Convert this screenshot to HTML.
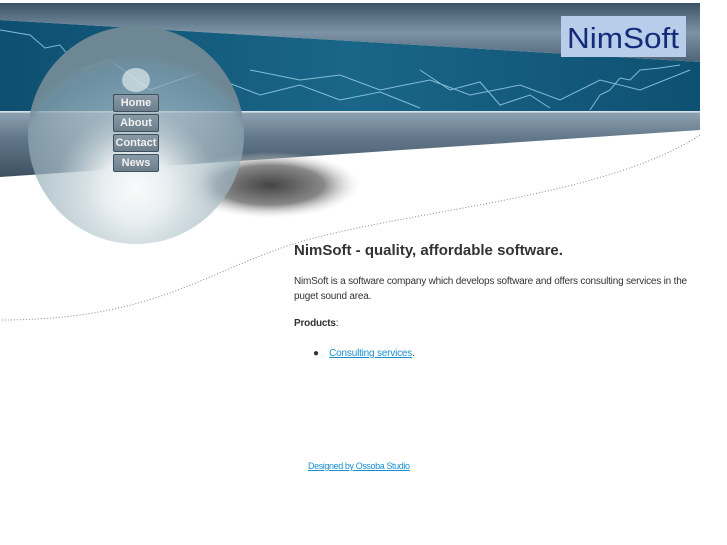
<!DOCTYPE html>
<html><head><style>
body{margin:0;width:727px;height:545px;background:#fff;font-family:"Liberation Sans",sans-serif;position:relative;overflow:hidden}
.b{position:absolute;left:113px;width:44px;height:16px;border:1px solid #3d4f5c;border-radius:2px;background:linear-gradient(#8a9aa6,#6d7f8c);color:#f0f0f0;font-size:11px;font-weight:bold;text-align:center;line-height:16px}
h1{position:absolute;left:294px;top:242px;margin:0;font-size:15px;color:#333;font-weight:bold}
.t{position:absolute;left:294px;font-size:10px;color:#333;line-height:15px;letter-spacing:-0.2px}
a{color:#1a8fd0}
</style></head><body>
<svg width="727" height="545" style="position:absolute;left:0;top:0">
<defs>
<linearGradient id="g1" x1="0" y1="0" x2="0" y2="1"><stop offset="0" stop-color="#3d5466"/><stop offset=".5" stop-color="#7c93a5"/><stop offset="1" stop-color="#4d6477"/></linearGradient>
<linearGradient id="g2" x1="0" y1="0" x2="0" y2="1"><stop offset="0" stop-color="#8ea2b2"/><stop offset=".4" stop-color="#62788a"/><stop offset="1" stop-color="#3e5163"/></linearGradient>
<linearGradient id="g3" x1="0" y1="0" x2="1" y2="0"><stop offset="0" stop-color="#0e4f70"/><stop offset=".5" stop-color="#1a6688"/><stop offset="1" stop-color="#0e5072"/></linearGradient>
<radialGradient id="sp" cx=".5" cy=".75" r=".62"><stop offset="0" stop-color="#fafbfb"/><stop offset=".25" stop-color="#e8eef0"/><stop offset=".6" stop-color="#a9bec7" stop-opacity=".7"/><stop offset=".9" stop-color="#8aa3af" stop-opacity=".75"/><stop offset="1" stop-color="#6d8794"/></radialGradient>
<radialGradient id="sh" cx=".5" cy=".5" r=".5"><stop offset="0" stop-color="#444"/><stop offset=".6" stop-color="#888"/><stop offset="1" stop-color="#ddd" stop-opacity="0"/></radialGradient>
</defs>
<path d="M0,3 H700 V62 L0,20 Z" fill="url(#g1)"/>
<path d="M0,20 L700,62 V111 H0 Z" fill="url(#g3)"/>
<path d="M0,112 H700 V130 L0,177 Z" fill="url(#g2)"/>
<line x1="0" y1="112" x2="700" y2="112" stroke="#c9d6de" stroke-width="1.5"/>
<g stroke="#9fd4ee" stroke-width="1" fill="none" opacity=".8">
<path d="M0,30 L30,35 45,48 60,45 80,70 110,60 150,90 200,72 260,95 300,85 340,100 380,92 420,108"/>
<path d="M250,70 L300,80 340,75 380,90 430,80 470,95 520,85 560,100 600,80 640,90 690,70"/>
<path d="M590,110 L600,95 610,90 620,78 630,80 640,70 660,68 680,65"/>
<path d="M420,70 L450,90 480,82 500,105 530,95 550,108"/>
</g>
<ellipse cx="270" cy="185" rx="90" ry="33" fill="url(#sh)"/>
<path d="M700,135 C600,200 400,210 290,245 C200,275 150,320 0,320" fill="none" stroke="#888" stroke-dasharray="1,2"/>
<ellipse cx="136" cy="135" rx="108" ry="109" fill="url(#sp)"/>
<ellipse cx="136" cy="80" rx="14" ry="12" fill="#fff" opacity=".55"/>
<rect x="561" y="16" width="125" height="41" fill="#b8cdea"/>
<text x="623" y="48" text-anchor="middle" font-family="Liberation Sans,sans-serif" font-size="29" fill="#152a78" textLength="112" lengthAdjust="spacingAndGlyphs">NimSoft</text>
</svg>
<div class="b" style="top:94px">Home</div>
<div class="b" style="top:114px">About</div>
<div class="b" style="top:134px">Contact</div>
<div class="b" style="top:154px">News</div>
<h1>NimSoft - quality, affordable software.</h1>
<div class="t" style="top:274px;width:400px">NimSoft is a software company which develops software and offers consulting services in the puget sound area.</div>
<div class="t" style="top:316px"><b>Products</b>:</div>
<div class="t" style="top:346px;left:313px">●&nbsp;&nbsp;&nbsp;&nbsp;<a href="#">Consulting services</a>.</div>
<div class="t" style="top:459px;left:308px;font-size:9px;letter-spacing:-0.4px"><a href="#">Designed by Ossoba Studio</a></div>
</body></html>
